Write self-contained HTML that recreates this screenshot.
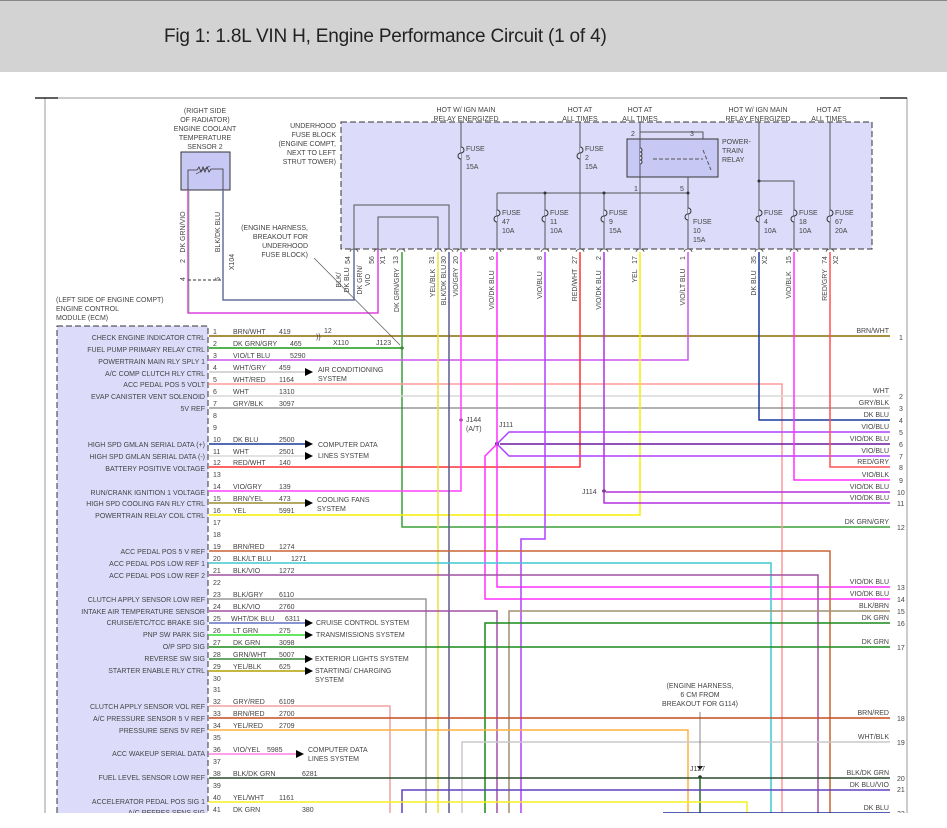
<!DOCTYPE html>
<html><head><meta charset="utf-8"><style>
html,body{margin:0;padding:0;background:#fff;width:947px;height:828px;overflow:hidden}
#hdr{position:absolute;left:0;top:0;width:947px;height:72px;background:#d3d3d3;border-top:1px solid #888;box-sizing:border-box}
#hdr span{position:absolute;left:164px;top:25px;font:19px "Liberation Sans Narrow","Liberation Sans",sans-serif;color:#222;letter-spacing:-0.2px}
svg{position:absolute;left:0;top:0}
text{font-family:"Liberation Sans",sans-serif;font-size:7px;fill:#444}
.r{text-anchor:end}.m{text-anchor:middle}
</style></head><body>
<div id="hdr"><span>Fig 1: 1.8L VIN H, Engine Performance Circuit (1 of 4)</span></div>
<svg width="947" height="828" viewBox="0 0 947 828">
<defs><clipPath id="c"><rect x="0" y="90" width="947" height="723"/></clipPath></defs>
<g clip-path="url(#c)">
<!-- frame -->
<path d="M45 98H907V828M45 98V828" stroke="#999" fill="none"/>
<path d="M35 98H58M880 98H907" stroke="#000" stroke-width="1.2"/>
<!-- fuse block -->
<rect x="341" y="122" width="531" height="127" fill="#dcdcfa" stroke="#333" stroke-dasharray="6,3"/>
<rect x="627" y="139" width="91" height="38" fill="#c8c8f4" stroke="#333"/>
<!-- ECM -->
<rect x="57" y="326" width="151" height="520" fill="#dcdcfa" stroke="#333" stroke-dasharray="6,3"/>
<!-- sensor -->
<rect x="181" y="152" width="49" height="38" fill="#c8c8f4" stroke="#333"/>
<path d="M188 190V170H197l2-3 2 5 2-5 2 5 2-5 2 5 2-3H223V190" stroke="#333" fill="none" stroke-width=".8"/>
<path d="M196 174l14-8" stroke="#333" stroke-width=".6"/>
<!-- sensor wires -->
<path d="M188 190V313H378V249" stroke="#e040e0" stroke-width="1.5" fill="none"/>
<path d="M189 190V313" stroke="#3a3" stroke-width=".5"/>
<path d="M223 190V300H354V249" stroke="#6670a0" stroke-width="1.5" fill="none"/>
<path d="M188 280H223" stroke="#333" stroke-dasharray="3,2"/>
<!-- fuse block inner -->
<g stroke="#555" fill="none" stroke-width="1">
<path d="M354 249V205H449V249"/><path d="M378 249V217H438V249"/>
<path d="M461 122V249"/><path d="M580 122V249"/><path d="M640 122V132H703V139"/>
<path d="M640 132V249"/><path d="M688 177V249"/><path d="M497 193H688"/>
<path d="M497 193V249M545 193V249M604 193V249"/>
<path d="M759 122V249M759 181H794V249M830 122V249"/>
<path d="M653 159H703M703 150l8 20" stroke-dasharray="4,2"/>
</g>
<g fill="#333"><circle cx="545" cy="193" r="1.5"/><circle cx="604" cy="193" r="1.5"/><circle cx="688" cy="193" r="1.5"/><circle cx="759" cy="181" r="1.5"/><circle cx="402" cy="348" r="1.6"/><circle cx="461" cy="420" r="1.6"/><circle cx="497" cy="444" r="2"/><circle cx="604" cy="491" r="1.8"/><circle cx="700" cy="777" r="1.8"/></g>
<!-- fuse symbols -->
<g stroke="#333" fill="#dcdcfa" stroke-width="1">
<path d="M461 147a3 3 0 0 1 0 6a3 3 0 0 0 0 6"/><path d="M580 147a3 3 0 0 1 0 6a3 3 0 0 0 0 6"/>
<path d="M497 210a3 3 0 0 1 0 6a3 3 0 0 0 0 6"/><path d="M545 210a3 3 0 0 1 0 6a3 3 0 0 0 0 6"/><path d="M604 210a3 3 0 0 1 0 6a3 3 0 0 0 0 6"/><path d="M688 208a3 3 0 0 1 0 6a3 3 0 0 0 0 6"/>
<path d="M759 210a3 3 0 0 1 0 6a3 3 0 0 0 0 6"/><path d="M794 210a3 3 0 0 1 0 6a3 3 0 0 0 0 6"/><path d="M830 210a3 3 0 0 1 0 6a3 3 0 0 0 0 6"/>
<path d="M640 148a2 2 0 0 1 0 4a2 2 0 0 1 0 4a2 2 0 0 1 0 4a2 2 0 0 1 0 4"/>
</g>
<!-- connector bumps -->
<g stroke="#555" fill="none" stroke-width=".8">
<path d="M350 252a4 3 0 0 1 8 0M374 252a4 3 0 0 1 8 0M397 252a4 3 0 0 1 8 0M434 252a4 3 0 0 1 8 0M445 252a4 3 0 0 1 8 0M457 252a4 3 0 0 1 8 0M493 252a4 3 0 0 1 8 0M541 252a4 3 0 0 1 8 0M576 252a4 3 0 0 1 8 0M600 252a4 3 0 0 1 8 0M636 252a4 3 0 0 1 8 0M684 252a4 3 0 0 1 8 0M755 252a4 3 0 0 1 8 0M790 252a4 3 0 0 1 8 0M826 252a4 3 0 0 1 8 0"/>
</g>
<!-- wires -->
<g fill="none" stroke-width="1.5">
<path d="M209 336H890" stroke="#8b6b00"/>
<path d="M209 348H402" stroke="#1a9a1a"/>
<path d="M402 252V527H890" stroke="#3aa03a"/>
<path d="M209 360H688V252" stroke="#cc55ee"/>
<path d="M209 372H305" stroke="#c8c8c8"/>
<path d="M209 384H782V813" stroke="#ff9a9a"/>
<path d="M209 396H890" stroke="#d8d8d8"/>
<path d="M209 408H890" stroke="#666" stroke-width="1"/>
<path d="M209 444H305" stroke="#1a3a9a"/>
<path d="M209 456H305" stroke="#d8d8d8"/>
<path d="M209 467H580V252" stroke="#ff3030"/>
<path d="M209 491H461V252" stroke="#ff40ff"/>
<path d="M209 503H305" stroke="#9a8a30"/>
<path d="M209 515H640V252" stroke="#f4f000"/>
<path d="M438 252V813" stroke="#e8e040"/>
<path d="M449 252V813" stroke="#5a5a90"/>
<path d="M497 252V587H890" stroke="#ff30ff"/>
<path d="M497 444L485 456V599H890" stroke="#ff30ff"/>
<path d="M497 444L509 432H890M497 444L509 456H890" stroke="#b040ff"/>
<path d="M500 444H890" stroke="#6a1aa0"/>
<path d="M545 252V539H521V813" stroke="#b040ff"/>
<path d="M604 252V503H890M606 492H890" stroke="#b030e0"/>
<path d="M759 252V420H890" stroke="#1a3a9a"/>
<path d="M794 252V480H890" stroke="#ff30ff"/>
<path d="M830 252V467H890" stroke="#ff5050"/>
<path d="M209 551H830V813" stroke="#c86432"/>
<path d="M209 563H771V813" stroke="#40c8d0"/>
<path d="M209 575H818V813" stroke="#a050a0"/>
<path d="M209 599H426V813" stroke="#999"/>
<path d="M209 611H497V813" stroke="#a050a0"/>
<path d="M509 813V611H890" stroke="#a09070"/>
<path d="M209 623H305" stroke="#6070c0"/>
<path d="M209 635H305" stroke="#30e030"/>
<path d="M209 647H890" stroke="#1a8a1a"/>
<path d="M485 813V623H890" stroke="#1a8a1a"/>
<path d="M209 659H305" stroke="#3a8a3a"/>
<path d="M209 671H305" stroke="#b0a000"/>
<path d="M209 706H390V813" stroke="#f0a0a0"/>
<path d="M209 718H890" stroke="#c84a20"/>
<path d="M209 730H688V813" stroke="#ffb040"/>
<path d="M462 813V742H890" stroke="#c8c8c8"/>
<path d="M209 754H297" stroke="#ff80e0"/>
<path d="M209 778H890" stroke="#2a4a2a"/>
<path d="M700 778V813" stroke="#2a6a2a"/>
<path d="M402 813V790H890" stroke="#6040c0"/>
<path d="M209 802H747V813" stroke="#f4f020"/>
<path d="M663 813H890" stroke="#1a2a9a"/>
</g>
<path d="M314 258L400 345" stroke="#555" stroke-width=".7"/>
<path d="M700 712V770" stroke="#555" stroke-width=".7"/>
<!-- arrows -->
<g fill="#000"><path d="M305 368l8 4-8 4zM305 440l8 4-8 4zM305 452l8 4-8 4zM305 499l8 4-8 4zM305 619l8 4-8 4zM305 631l8 4-8 4zM305 655l8 4-8 4zM305 667l8 4-8 4zM296 750l8 4-8 4zM697 766l3 4 3-4z"/></g>
<!-- labels -->
<g>
<text class="m" x="205" y="113">(RIGHT SIDE</text><text class="m" x="205" y="122">OF RADIATOR)</text><text class="m" x="205" y="131">ENGINE COOLANT</text><text class="m" x="205" y="140">TEMPERATURE</text><text class="m" x="205" y="149">SENSOR 2</text>
<text class="r" x="336" y="128">UNDERHOOD</text><text class="r" x="336" y="137">FUSE BLOCK</text><text class="r" x="336" y="146">(ENGINE COMPT,</text><text class="r" x="336" y="155">NEXT TO LEFT</text><text class="r" x="336" y="164">STRUT TOWER)</text>
<text class="m" x="466" y="112">HOT W/ IGN MAIN</text><text class="m" x="466" y="121">RELAY ENERGIZED</text>
<text class="m" x="580" y="112">HOT AT</text><text class="m" x="580" y="121">ALL TIMES</text>
<text class="m" x="640" y="112">HOT AT</text><text class="m" x="640" y="121">ALL TIMES</text>
<text class="m" x="758" y="112">HOT W/ IGN MAIN</text><text class="m" x="758" y="121">RELAY ENERGIZED</text>
<text class="m" x="829" y="112">HOT AT</text><text class="m" x="829" y="121">ALL TIMES</text>
<text x="466" y="151">FUSE</text><text x="466" y="160">5</text><text x="466" y="169">15A</text>
<text x="585" y="151">FUSE</text><text x="585" y="160">2</text><text x="585" y="169">15A</text>
<text x="722" y="144">POWER-</text><text x="722" y="153">TRAIN</text><text x="722" y="162">RELAY</text>
<text x="631" y="136">2</text><text x="690" y="136">3</text><text x="634" y="191">1</text><text x="680" y="191">5</text>
<text x="502" y="215">FUSE</text><text x="502" y="224">47</text><text x="502" y="233">10A</text>
<text x="550" y="215">FUSE</text><text x="550" y="224">11</text><text x="550" y="233">10A</text>
<text x="609" y="215">FUSE</text><text x="609" y="224">9</text><text x="609" y="233">15A</text>
<text x="693" y="224">FUSE</text><text x="693" y="233">10</text><text x="693" y="242">15A</text>
<text x="764" y="215">FUSE</text><text x="764" y="224">4</text><text x="764" y="233">10A</text>
<text x="799" y="215">FUSE</text><text x="799" y="224">18</text><text x="799" y="233">10A</text>
<text x="835" y="215">FUSE</text><text x="835" y="224">67</text><text x="835" y="233">20A</text>
<text class="r" x="308" y="230">(ENGINE HARNESS,</text><text class="r" x="308" y="239">BREAKOUT FOR</text><text class="r" x="308" y="248">UNDERHOOD</text><text class="r" x="308" y="257">FUSE BLOCK)</text>
<text x="56" y="302">(LEFT SIDE OF ENGINE COMPT)</text><text x="56" y="311">ENGINE CONTROL</text><text x="56" y="320">MODULE (ECM)</text>
<text class="m" x="700" y="688">(ENGINE HARNESS,</text><text class="m" x="700" y="697">6 CM FROM</text><text class="m" x="700" y="706">BREAKOUT FOR G114)</text>
<text x="376" y="345">J123</text><text x="466" y="422">J144</text><text x="466" y="431">(A/T)</text><text x="499" y="427">J111</text><text x="582" y="494">J114</text><text x="690" y="771">J127</text>
<text x="324" y="333">12</text><text x="333" y="345">X110</text><text x="316" y="339">)}</text>
</g>
<!-- rotated labels -->
<g>
<text class="m" transform="translate(185,232) rotate(-90)">DK GRN/VIO</text>
<text class="m" transform="translate(220,232) rotate(-90)">BLK/DK BLU</text>
<text class="m" transform="translate(234,262) rotate(-90)">X104</text>
<text transform="translate(185,263) rotate(-90)">2</text><text transform="translate(185,281) rotate(-90)">4</text><text transform="translate(220,281) rotate(-90)">5</text>
<text class="m" transform="translate(341,280) rotate(-90)">BLK/</text><text class="m" transform="translate(349,280) rotate(-90)">DK BLU</text>
<text class="m" transform="translate(362,280) rotate(-90)">DK GRN/</text><text class="m" transform="translate(370,280) rotate(-90)">VIO</text>
<text class="m" transform="translate(399,290) rotate(-90)">DK GRN/GRY</text>
<text class="m" transform="translate(435,283) rotate(-90)">YEL/BLK</text>
<text class="m" transform="translate(446,285) rotate(-90)">BLK/DK BLU</text>
<text class="m" transform="translate(458,282) rotate(-90)">VIO/GRY</text>
<text class="m" transform="translate(494,290) rotate(-90)">VIO/DK BLU</text>
<text class="m" transform="translate(542,285) rotate(-90)">VIO/BLU</text>
<text class="m" transform="translate(577,285) rotate(-90)">RED/WHT</text>
<text class="m" transform="translate(601,290) rotate(-90)">VIO/DK BLU</text>
<text class="m" transform="translate(637,276) rotate(-90)">YEL</text>
<text class="m" transform="translate(685,287) rotate(-90)">VIO/LT BLU</text>
<text class="m" transform="translate(756,283) rotate(-90)">DK BLU</text>
<text class="m" transform="translate(791,285) rotate(-90)">VIO/BLK</text>
<text class="m" transform="translate(827,285) rotate(-90)">RED/GRY</text>
<text class="m" transform="translate(350,260) rotate(-90)">54</text><text class="m" transform="translate(374,260) rotate(-90)">56</text><text class="m" transform="translate(385,260) rotate(-90)">X1</text><text class="m" transform="translate(398,260) rotate(-90)">13</text>
<text class="m" transform="translate(434,260) rotate(-90)">31</text><text class="m" transform="translate(446,260) rotate(-90)">30</text><text class="m" transform="translate(458,260) rotate(-90)">20</text>
<text class="m" transform="translate(494,258) rotate(-90)">6</text><text class="m" transform="translate(542,258) rotate(-90)">8</text><text class="m" transform="translate(577,260) rotate(-90)">27</text><text class="m" transform="translate(601,258) rotate(-90)">2</text><text class="m" transform="translate(637,260) rotate(-90)">17</text><text class="m" transform="translate(685,258) rotate(-90)">1</text>
<text class="m" transform="translate(756,260) rotate(-90)">35</text><text class="m" transform="translate(767,260) rotate(-90)">X2</text><text class="m" transform="translate(791,260) rotate(-90)">15</text><text class="m" transform="translate(827,260) rotate(-90)">74</text><text class="m" transform="translate(838,260) rotate(-90)">X2</text>
</g>
<!-- ECM labels -->
<g>
<text class="r" x="205" y="340">CHECK ENGINE INDICATOR CTRL</text>
<text class="r" x="205" y="352">FUEL PUMP PRIMARY RELAY CTRL</text>
<text class="r" x="205" y="364">POWERTRAIN MAIN RLY SPLY 1</text>
<text class="r" x="205" y="376">A/C COMP CLUTCH RLY CTRL</text>
<text class="r" x="205" y="387">ACC PEDAL POS 5 VOLT</text>
<text class="r" x="205" y="399">EVAP CANISTER VENT SOLENOID</text>
<text class="r" x="205" y="411">5V REF</text>
<text class="r" x="205" y="447">HIGH SPD GMLAN SERIAL DATA (+)</text>
<text class="r" x="205" y="459">HIGH SPD GMLAN SERIAL DATA (-)</text>
<text class="r" x="205" y="471">BATTERY POSITIVE VOLTAGE</text>
<text class="r" x="205" y="495">RUN/CRANK IGNITION 1 VOLTAGE</text>
<text class="r" x="205" y="506">HIGH SPD COOLING FAN RLY CTRL</text>
<text class="r" x="205" y="518">POWERTRAIN RELAY COIL CTRL</text>
<text class="r" x="205" y="554">ACC PEDAL POS 5 V REF</text>
<text class="r" x="205" y="566">ACC PEDAL POS LOW REF 1</text>
<text class="r" x="205" y="578">ACC PEDAL POS LOW REF 2</text>
<text class="r" x="205" y="602">CLUTCH APPLY SENSOR LOW REF</text>
<text class="r" x="205" y="614">INTAKE AIR TEMPERATURE SENSOR</text>
<text class="r" x="205" y="625">CRUISE/ETC/TCC BRAKE SIG</text>
<text class="r" x="205" y="637">PNP SW PARK SIG</text>
<text class="r" x="205" y="649">O/P SPD SIG</text>
<text class="r" x="205" y="661">REVERSE SW SIG</text>
<text class="r" x="205" y="673">STARTER ENABLE RLY CTRL</text>
<text class="r" x="205" y="709">CLUTCH APPLY SENSOR VOL REF</text>
<text class="r" x="205" y="721">A/C PRESSURE SENSOR 5 V REF</text>
<text class="r" x="205" y="733">PRESSURE SENS 5V REF</text>
<text class="r" x="205" y="756">ACC WAKEUP SERIAL DATA</text>
<text class="r" x="205" y="780">FUEL LEVEL SENSOR LOW REF</text>
<text class="r" x="205" y="804">ACCELERATOR PEDAL POS SIG 1</text>
<text class="r" x="205" y="815">A/C REFRES SENS SIG</text>
</g>
<!-- pin numbers -->
<g>
<text x="213" y="334">1</text><text x="213" y="346">2</text><text x="213" y="358">3</text><text x="213" y="370">4</text><text x="213" y="382">5</text><text x="213" y="394">6</text><text x="213" y="406">7</text><text x="213" y="418">8</text><text x="213" y="430">9</text><text x="213" y="442">10</text><text x="213" y="454">11</text><text x="213" y="465">12</text><text x="213" y="477">13</text><text x="213" y="489">14</text><text x="213" y="501">15</text><text x="213" y="513">16</text><text x="213" y="525">17</text><text x="213" y="537">18</text><text x="213" y="549">19</text><text x="213" y="561">20</text><text x="213" y="573">21</text><text x="213" y="585">22</text><text x="213" y="597">23</text><text x="213" y="609">24</text><text x="213" y="621">25</text><text x="213" y="633">26</text><text x="213" y="645">27</text><text x="213" y="657">28</text><text x="213" y="669">29</text><text x="213" y="681">30</text><text x="213" y="692">31</text><text x="213" y="704">32</text><text x="213" y="716">33</text><text x="213" y="728">34</text><text x="213" y="740">35</text><text x="213" y="752">36</text><text x="213" y="764">37</text><text x="213" y="776">38</text><text x="213" y="788">39</text><text x="213" y="800">40</text><text x="213" y="812">41</text>
</g>
<!-- wire names -->
<g>
<text x="233" y="334">BRN/WHT</text><text x="279" y="334">419</text>
<text x="233" y="346">DK GRN/GRY</text><text x="290" y="346">465</text>
<text x="233" y="358">VIO/LT BLU</text><text x="290" y="358">5290</text>
<text x="233" y="370">WHT/GRY</text><text x="279" y="370">459</text>
<text x="233" y="382">WHT/RED</text><text x="279" y="382">1164</text>
<text x="233" y="394">WHT</text><text x="279" y="394">1310</text>
<text x="233" y="406">GRY/BLK</text><text x="279" y="406">3097</text>
<text x="233" y="442">DK BLU</text><text x="279" y="442">2500</text>
<text x="233" y="454">WHT</text><text x="279" y="454">2501</text>
<text x="233" y="465">RED/WHT</text><text x="279" y="465">140</text>
<text x="233" y="489">VIO/GRY</text><text x="279" y="489">139</text>
<text x="233" y="501">BRN/YEL</text><text x="279" y="501">473</text>
<text x="233" y="513">YEL</text><text x="279" y="513">5991</text>
<text x="233" y="549">BRN/RED</text><text x="279" y="549">1274</text>
<text x="233" y="561">BLK/LT BLU</text><text x="291" y="561">1271</text>
<text x="233" y="573">BLK/VIO</text><text x="279" y="573">1272</text>
<text x="233" y="597">BLK/GRY</text><text x="279" y="597">6110</text>
<text x="233" y="609">BLK/VIO</text><text x="279" y="609">2760</text>
<text x="231" y="621">WHT/DK BLU</text><text x="285" y="621">6311</text>
<text x="233" y="633">LT GRN</text><text x="279" y="633">275</text>
<text x="233" y="645">DK GRN</text><text x="279" y="645">3098</text>
<text x="233" y="657">GRN/WHT</text><text x="279" y="657">5007</text>
<text x="233" y="669">YEL/BLK</text><text x="279" y="669">625</text>
<text x="233" y="704">GRY/RED</text><text x="279" y="704">6109</text>
<text x="233" y="716">BRN/RED</text><text x="279" y="716">2700</text>
<text x="233" y="728">YEL/RED</text><text x="279" y="728">2709</text>
<text x="233" y="752">VIO/YEL</text><text x="267" y="752">5985</text>
<text x="233" y="776">BLK/DK GRN</text><text x="302" y="776">6281</text>
<text x="233" y="800">YEL/WHT</text><text x="279" y="800">1161</text>
<text x="233" y="812">DK GRN</text><text x="302" y="812">380</text>
</g>
<!-- system labels -->
<g>
<text x="318" y="372">AIR CONDITIONING</text><text x="318" y="381">SYSTEM</text>
<text x="318" y="447">COMPUTER DATA</text><text x="318" y="458">LINES SYSTEM</text>
<text x="317" y="502">COOLING FANS</text><text x="317" y="511">SYSTEM</text>
<text x="316" y="625">CRUISE CONTROL SYSTEM</text>
<text x="316" y="637">TRANSMISSIONS SYSTEM</text>
<text x="315" y="661">EXTERIOR LIGHTS SYSTEM</text>
<text x="315" y="673">STARTING/ CHARGING</text><text x="315" y="682">SYSTEM</text>
<text x="308" y="752">COMPUTER DATA</text><text x="308" y="761">LINES SYSTEM</text>
</g>
<!-- right labels -->
<g>
<text class="r" x="889" y="333">BRN/WHT</text><text x="899" y="340">1</text>
<text class="r" x="889" y="393">WHT</text><text x="899" y="399">2</text>
<text class="r" x="889" y="405">GRY/BLK</text><text x="899" y="411">3</text>
<text class="r" x="889" y="417">DK BLU</text><text x="899" y="423">4</text>
<text class="r" x="889" y="429">VIO/BLU</text><text x="899" y="435">5</text>
<text class="r" x="889" y="441">VIO/DK BLU</text><text x="899" y="447">6</text>
<text class="r" x="889" y="453">VIO/BLU</text><text x="899" y="459">7</text>
<text class="r" x="889" y="464">RED/GRY</text><text x="899" y="470">8</text>
<text class="r" x="889" y="477">VIO/BLK</text><text x="899" y="483">9</text>
<text class="r" x="889" y="489">VIO/DK BLU</text><text x="897" y="495">10</text>
<text class="r" x="889" y="500">VIO/DK BLU</text><text x="897" y="506">11</text>
<text class="r" x="889" y="524">DK GRN/GRY</text><text x="897" y="530">12</text>
<text class="r" x="889" y="584">VIO/DK BLU</text><text x="897" y="590">13</text>
<text class="r" x="889" y="596">VIO/DK BLU</text><text x="897" y="602">14</text>
<text class="r" x="889" y="608">BLK/BRN</text><text x="897" y="614">15</text>
<text class="r" x="889" y="620">DK GRN</text><text x="897" y="626">16</text>
<text class="r" x="889" y="644">DK GRN</text><text x="897" y="650">17</text>
<text class="r" x="889" y="715">BRN/RED</text><text x="897" y="721">18</text>
<text class="r" x="889" y="739">WHT/BLK</text><text x="897" y="745">19</text>
<text class="r" x="889" y="775">BLK/DK GRN</text><text x="897" y="781">20</text>
<text class="r" x="889" y="787">DK BLU/VIO</text><text x="897" y="792">21</text>
<text class="r" x="889" y="810">DK BLU</text><text x="897" y="816">22</text>
</g>
</g>
</svg>
</body></html>
